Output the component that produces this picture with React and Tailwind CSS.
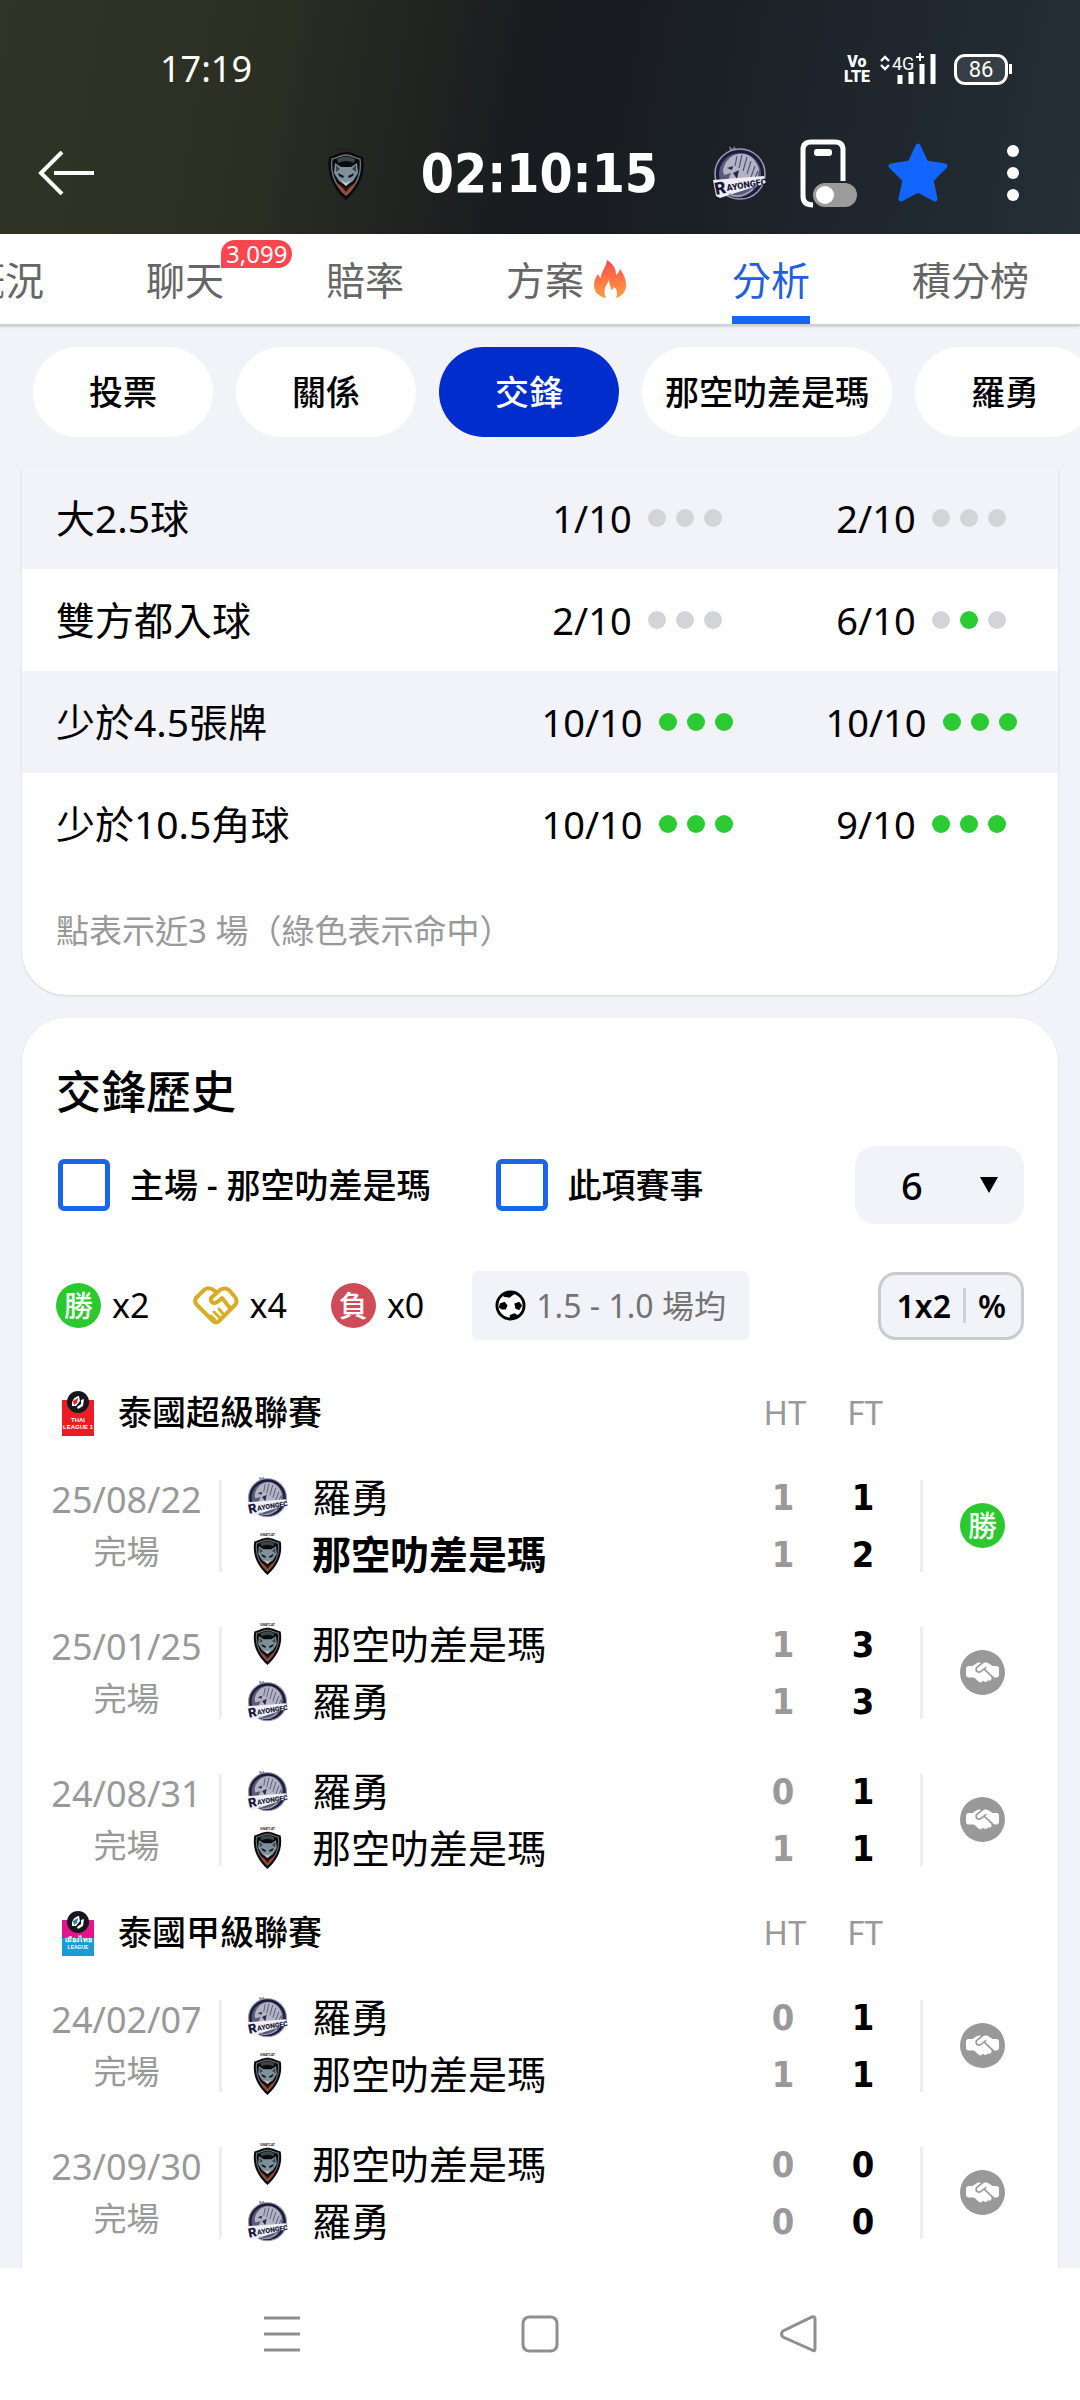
import { useState } from 'react'
import { FaHandshakeSimple } from 'react-icons/fa6'

const tabs = [
  { id: 'overview', label: '概況' },
  { id: 'chat', label: '聊天', badge: '3,099' },
  { id: 'odds', label: '賠率' },
  { id: 'tips', label: '方案', hot: true },
  { id: 'analysis', label: '分析' },
  { id: 'table', label: '積分榜' },
]

const chips = ['投票', '關係', '交鋒', '那空叻差是瑪', '羅勇']

const trends = [
  { label: '大2.5球', home: '1/10', homeDots: [0, 0, 0], away: '2/10', awayDots: [0, 0, 0] },
  { label: '雙方都入球', home: '2/10', homeDots: [0, 0, 0], away: '6/10', awayDots: [0, 1, 0] },
  { label: '少於4.5張牌', home: '10/10', homeDots: [1, 1, 1], away: '10/10', awayDots: [1, 1, 1] },
  { label: '少於10.5角球', home: '10/10', homeDots: [1, 1, 1], away: '9/10', awayDots: [1, 1, 1] },
]

const R = '羅勇'
const N = '那空叻差是瑪'

const leagues = [
  {
    id: 't1',
    name: '泰國超級聯賽',
    matches: [
      { date: '25/08/22', teams: [R, N], ht: [1, 1], ft: [1, 2], result: 'win', winner: 1 },
      { date: '25/01/25', teams: [N, R], ht: [1, 1], ft: [3, 3], result: 'draw' },
      { date: '24/08/31', teams: [R, N], ht: [0, 1], ft: [1, 1], result: 'draw' },
    ],
  },
  {
    id: 't2',
    name: '泰國甲級聯賽',
    matches: [
      { date: '24/02/07', teams: [R, N], ht: [0, 1], ft: [1, 1], result: 'draw' },
      { date: '23/09/30', teams: [N, R], ht: [0, 0], ft: [0, 0], result: 'draw' },
    ],
  },
]

/* ── Logos and icons ── */

function FoxLogo({ className }) {
  return (
    <svg viewBox="0 0 40 54" className={className} aria-hidden="true">
      <text x="20" y="4" textAnchor="middle" fontSize="4" fontWeight="700" fontFamily="Liberation Sans, sans-serif" fill="#222">SWATCAT</text>
      <path d="M20 6C26 6 30 9 37 11C40 28 33 43 20 54C7 43 0 28 3 11C10 9 14 6 20 6Z" fill="#0b0b0d" />
      <path d="M20 9C25 9 29 12 34 13C36 27 31 39 20 49C9 39 4 27 6 13C11 12 15 9 20 9Z" fill="none" stroke="#6d7378" strokeWidth="1.4" />
      <path d="M11 13Q20 8 29 13L28 17Q20 13 12 17Z" fill="#3c464d" />
      <path d="M9 17L15 21H25L31 17L32 27L27 35L20 40L13 35L8 27Z" fill="#7f909b" />
      <path d="M10 19L14 23L10 26ZM30 19L26 23L30 26Z" fill="#39444c" />
      <path d="M12 27L18 30L17 32L13 30ZM28 27L22 30L23 32L27 30Z" fill="#101418" />
      <path d="M15 34L20 37L25 34L20 40Z" fill="#c5ced4" />
      <path d="M10 36L20 44L30 36L28 40L20 49L12 40Z" fill="#a5402d" />
      <path d="M13 37L20 42L27 37L20 46Z" fill="#27130f" />
    </svg>
  )
}

function RayongLogo({ className }) {
  return (
    <svg viewBox="0 0 54 54" className={className} aria-hidden="true">
      <path d="M17 5L16 0L20 3L21 0L24 4Z" fill="#77778d" />
      <circle cx="27" cy="28" r="25" fill="#1c1c3c" stroke="#9c9cb0" strokeWidth="1.5" />
      <circle cx="27" cy="28" r="21" fill="#5a5a76" />
      <path d="M10 25C11 17 17 9 25 8C36 6 44 14 46 24L44 34L27 36L15 34L18 27L11 29Z" fill="#b3b3c4" />
      <path d="M24 10L22 20M29 9L26 22M34 11L30 25M38 15L34 28M42 20L38 31M45 25L41 34" stroke="#55557a" strokeWidth="1.2" fill="none" />
      <path d="M14 22L20 20L19 24ZM20 27L26 24L24 33Z" fill="#28284c" />
      <path d="M0 34L51 30L53 37L7 52L3 50Z" fill="#eeeef4" />
      <text x="3" y="49" fontSize="17" fontWeight="900" fontFamily="Roboto, sans-serif" fill="#17173a" transform="rotate(-12 3 49)">R</text>
      <text x="14" y="45" fontSize="9" fontWeight="900" fontFamily="Roboto, sans-serif" fill="#17173a" transform="rotate(-9 14 45)">AYONGFC</text>
      <path d="M16 48Q28 54 40 43" fill="none" stroke="#9c9cb0" strokeWidth="2" />
    </svg>
  )
}

function LeagueLogo({ id }) {
  const second = id === 't2'
  return (
    <svg viewBox="0 0 34 46" className="h-[46px] w-[34px]" aria-hidden="true">
      <rect x="1" y="10" width="32" height="36" fill={second ? '#e6148c' : '#ed1c24'} />
      {second && <rect x="1" y="28" width="32" height="18" fill="#1c9ad6" />}
      <circle cx="17" cy="12" r="11" fill="#15171c" />
      <path d="M11 13C12 8 16 6 18 6L19 11L15 16L11 16ZM20 10L23 9L22 16L17 19L16 17L20 14Z" fill="#fff" />
      <path d="M12 11L17 8L16 13L13 15Z" fill={second ? '#2b7f9d' : '#ed1c24'} />
      <g fill="#fff" fontFamily="Liberation Sans, sans-serif" fontWeight="700" textAnchor="middle">
        {second ? (
          <>
            <text x="17" y="32" fontSize="7">เมืองไทย</text>
            <text x="17" y="39" fontSize="5">LEAGUE</text>
          </>
        ) : (
          <>
            <text x="17" y="32" fontSize="6">THAI</text>
            <text x="17" y="39" fontSize="6">LEAGUE 1</text>
          </>
        )}
      </g>
    </svg>
  )
}

function Flame() {
  return (
    <svg viewBox="0 0 32 38" className="h-[38px] w-8" aria-hidden="true">
      <defs>
        <linearGradient id="flame" x1="0" y1="0" x2="0" y2="1">
          <stop offset="0" stopColor="#ff4a4f" />
          <stop offset="1" stopColor="#ff9f3f" />
        </linearGradient>
      </defs>
      <path fill="url(#flame)" d="M13 0C19 4 22 8 22 15C24 14 25 12 26 9C30 14 32 20 32 25C32 32 28 36 22 38C24 33 23 29 20 27C19 30 18 30 17 29C16 25 15 22 15 20C13 25 8 29 12 38C5 37 0 32 0 25C0 20 2 17 4 14C5 16 5 17 7 18C7 11 12 8 13 0Z" />
    </svg>
  )
}

function DrawIcon() {
  return (
    <svg viewBox="0 0 46 39" className="h-[39px] w-[46px]" fill="none" stroke="#d6ad27" strokeWidth="4" strokeLinecap="round" strokeLinejoin="round" aria-hidden="true">
      <path d="M22 5Q16 0 11 4L3 12Q1 16 4 19L20 35Q23 38 26 35L42 19Q45 15 42 11L36 4Q32 1 27 4L18 12Q17 16 21 17Q24 17 29 12L37 22" />
      <path d="M26 23L31 29M21 26L27 32M18 30L22 34" strokeWidth="3" />
    </svg>
  )
}

function Ball() {
  return (
    <svg viewBox="0 0 32 32" className="size-[31px]" aria-hidden="true">
      <circle cx="16" cy="16" r="14" fill="#fff" stroke="#000" strokeWidth="3" />
      <path d="M8 4L16 2L20 4L15 8L9 7ZM5 14L10 12L13 16L11 20L7 20L4 18ZM20 14L25 12L28 16L25 21L21 19ZM15 26L20 24L24 26L20 30H16Z" fill="#000" />
    </svg>
  )
}

function PhoneToggle() {
  return (
    <svg viewBox="0 0 58 70" className="h-[70px] w-[58px]" aria-hidden="true">
      <path d="M43 43V12Q43 4 35 4H11Q3 4 3 12V58Q3 67 13 67" fill="none" stroke="#fff" strokeWidth="5" />
      <rect x="14" y="11" width="18" height="7" rx="3" fill="#fff" />
      <rect x="13" y="45" width="44" height="24" rx="12" fill="#9b9b9b" />
      <circle cx="25" cy="57" r="9" fill="#fff" />
    </svg>
  )
}

/* ── Small pieces ── */

function Dots({ values }) {
  return (
    <span className="flex gap-[10px]">
      {values.map((v, i) => (
        <span key={i} className={`size-[18px] rounded-full ${v ? 'bg-[#2dcb33]' : 'bg-[#d3d4d7]'}`} />
      ))}
    </span>
  )
}

function Ratio({ value, dots }) {
  return (
    <div className="flex items-center justify-center gap-4">
      <span>{value}</span>
      <Dots values={dots} />
    </div>
  )
}

function ResultBadge({ result }) {
  if (result === 'draw') {
    return (
      <span className="flex size-[45px] items-center justify-center rounded-full bg-[#999]">
        <FaHandshakeSimple className="size-[33px] text-white" />
      </span>
    )
  }
  return (
    <span className={`flex size-[45px] items-center justify-center rounded-full text-[29px] leading-none font-medium text-white ${result === 'win' ? 'bg-[#2bc92f]' : 'bg-[#d04b58]'}`}>
      {result === 'win' ? '勝' : '負'}
    </span>
  )
}

function StatusBar() {
  return (
    <div className="flex h-[138px] items-center justify-between pr-[68px] pl-40">
      <span className="text-4xl">17:19</span>
      <div className="flex items-center">
        <span className="flex flex-col text-center font-['Roboto',sans-serif] text-base leading-[15px] font-black">
          <span>Vo</span>
          <span>LTE</span>
        </span>
        <svg viewBox="0 0 58 32" className="ml-[10px] h-8 w-[58px] overflow-visible" aria-hidden="true">
          <path d="M1 8L5 4L9 8M1 12L5 16L9 12" fill="none" stroke="#fff" strokeWidth="2.4" />
          <text x="12" y="17" fontSize="18" fontFamily="Roboto, sans-serif" fill="#fff">4G</text>
          <path d="M40 0V8M36 4H44" stroke="#fff" strokeWidth="2" />
          <path d="M20 22V31M31 19V31M42 11V31M53 1V31" stroke="#fff" strokeWidth="5" />
        </svg>
        <span className="ml-4 flex h-[31px] w-[54px] items-center justify-center rounded-[11px] border-3 border-white bg-white/10 font-['Roboto',sans-serif] text-[22px]">86</span>
        <span className="ml-px h-[10px] w-[3px] bg-white" />
      </div>
    </div>
  )
}

function MatchHeader() {
  return (
    <header className="h-[234px] bg-[linear-gradient(100deg,#303527_0%,#2b2e22_25%,#181b1f_50%,#1c2228_70%,#242f36_100%)] text-white">
      <StatusBar />
      <div className="flex h-[70px] items-center pr-[60px] pl-[38px]">
        <button aria-label="返回">
          <svg viewBox="0 0 58 44" className="h-11 w-[58px]" fill="none" stroke="#fff" strokeWidth="4">
            <path d="M24 1L3 22L24 43M16 22H56" />
          </svg>
        </button>
        <div className="mr-[33px] flex flex-1 items-center justify-end gap-[55px]">
          <FoxLogo className="h-[54px] w-10" />
          <span className="font-['DejaVu_Sans_Condensed','Roboto',sans-serif] text-[53px] leading-none font-bold">02:10:15</span>
          <RayongLogo className="size-[54px]" />
        </div>
        <div className="flex items-center">
          <button aria-label="懸浮窗"><PhoneToggle /></button>
          <button aria-label="收藏" className="ml-[30px]">
            <svg viewBox="0 0 60 60" className="size-[60px]">
              <path d="M30 3L38 20L57 23L43 37L47 56L30 47L13 56L17 37L3 23L22 20Z" fill="#1266ff" stroke="#1266ff" strokeWidth="5" strokeLinejoin="round" />
            </svg>
          </button>
          <button aria-label="更多" className="ml-[58px]">
            <svg viewBox="0 0 14 60" className="h-[60px] w-[14px]" fill="#fff">
              <circle cx="7" cy="8" r="6" />
              <circle cx="7" cy="30" r="6" />
              <circle cx="7" cy="52" r="6" />
            </svg>
          </button>
        </div>
      </div>
    </header>
  )
}

function MatchRow({ match }) {
  return (
    <tr className="h-[147px]">
      <td className="p-0">
        <div className="flex h-[92px] flex-col justify-center border-r-3 border-[#eee] pl-3 text-center leading-[52px] text-[#999]">
          <span className="text-4xl leading-[52px]">{match.date}</span>
          <span className="text-[33px]">完場</span>
        </div>
      </td>
      <td className="p-0 pl-[25px]">
        {match.teams.map((t, i) => (
          <div key={t} className="flex h-[57px] items-center gap-6">
            <span className="flex w-[41px] justify-center">
              {t === R ? <RayongLogo className="size-[42px]" /> : <FoxLogo className="h-[42px] w-[31px]" />}
            </span>
            <span className={`text-[39px] ${match.winner === i ? 'font-bold' : ''}`}>{t}</span>
          </div>
        ))}
      </td>
      {['ht', 'ft'].map(k => (
        <td key={k} className={`p-0 pr-1 text-center font-['DejaVu_Sans_Condensed','Roboto',sans-serif] text-[36px] leading-[57px] font-bold ${k === 'ht' ? 'text-[#999]' : 'text-black'}`}>
          <div>{match[k][0]}</div>
          <div>{match[k][1]}</div>
        </td>
      ))}
      <td className="p-0 pl-[15px]">
        <div className="flex h-[92px] items-center justify-center border-l-3 border-[#eee] pr-4">
          <ResultBadge result={match.result} />
        </div>
      </td>
    </tr>
  )
}

function LeagueTable({ league }) {
  return (
    <table className="w-full table-fixed">
      <colgroup>
        <col className="w-[200px]" />
        <col />
        <col className="w-20" />
        <col className="w-20" />
        <col className="w-[153px]" />
      </colgroup>
      <thead>
        <tr className="h-[79px] text-[#999]">
          <th colSpan={2} className="p-0 pl-[39px] text-left font-medium text-black">
            <div className="flex items-center gap-[23px]">
              <LeagueLogo id={league.id} />
              <span className="text-[34px]">{league.name}</span>
            </div>
          </th>
          <th className="p-0 text-[33px] font-normal">HT</th>
          <th className="p-0 text-[33px] font-normal">FT</th>
          <td />
        </tr>
      </thead>
      <tbody>
        {league.matches.map(m => <MatchRow key={m.date} match={m} />)}
      </tbody>
    </table>
  )
}

export default function App() {
  const [tab, setTab] = useState('analysis')
  const [chip, setChip] = useState('交鋒')
  const [homeOnly, setHomeOnly] = useState(false)
  const [sameLeague, setSameLeague] = useState(false)
  const [count, setCount] = useState('6')

  const box = 'size-[52px] appearance-none rounded-md border-5 border-[#1c64e8] bg-white checked:bg-[#1c64e8]'

  return (
    <div className="flex min-h-screen flex-col overflow-hidden bg-[#f2f3f8] font-['Noto_Sans','Noto_Sans_CJK_TC',sans-serif] text-black">
      <MatchHeader />

      {/* ── Tabs ── */}
      <nav className="-ml-[34px] flex h-[92px] gap-[102px] border-b-2 border-[#cfd0d4] bg-white shadow-sm">
        {tabs.map(t => (
          <button
            key={t.id}
            onClick={() => setTab(t.id)}
            className={`relative flex shrink-0 items-center gap-[10px] border-b-8 pt-2 text-[39px] leading-none ${tab === t.id ? 'border-[#1566f0] text-[#1f5fe0]' : 'border-transparent text-[#666]'} ${t.hot ? 'pr-1' : ''}`}
          >
            {t.label}
            {t.hot && <Flame />}
            {t.badge && (
              <span className="absolute top-[6px] left-[75px] rounded-full rounded-bl-none bg-[#f9464f] px-[5px] text-2xl leading-7 text-white">{t.badge}</span>
            )}
          </button>
        ))}
      </nav>

      {/* ── Section chips ── */}
      <div className="flex gap-[23px] py-[21px] pl-[33px]">
        {chips.map(c => (
          <button
            key={c}
            onClick={() => setChip(c)}
            className={`h-[90px] min-w-[180px] shrink-0 rounded-full px-[23px] text-[34px] font-medium ${chip === c ? 'bg-[#002dcc] text-white' : 'bg-white'}`}
          >
            {c}
          </button>
        ))}
      </div>

      <main className="mt-[9px] flex flex-1 flex-col gap-[23px] px-[22px]">
        {/* ── Trends ── */}
        <section className="rounded-b-[44px] bg-white shadow-sm">
          <table className="w-full table-fixed">
            <colgroup>
              <col />
              <col className="w-[294px]" />
              <col className="w-[274px]" />
            </colgroup>
            <tbody className="text-[38px]">
              {trends.map(t => (
                <tr key={t.label} className="h-[102px] odd:bg-[#f2f3f8]">
                  <th scope="row" className="p-0 pl-[34px] text-left text-[39px] font-normal">{t.label}</th>
                  <td className="p-0"><Ratio value={t.home} dots={t.homeDots} /></td>
                  <td className="p-0"><Ratio value={t.away} dots={t.awayDots} /></td>
                </tr>
              ))}
            </tbody>
          </table>
          <p className="px-[34px] pt-8 pb-10 text-[33px] leading-[48px] text-[#999]">點表示近3 場（綠色表示命中）</p>
        </section>

        {/* ── Head to head history ── */}
        <section className="flex-1 rounded-t-[44px] bg-white shadow-sm">
          <h2 className="px-[34px] pt-[41px] text-[45px] leading-[66px] font-medium">交鋒歷史</h2>

          <div className="mt-[21px] flex items-center pr-[34px] pl-9 text-[34px] font-medium">
            <label className="flex items-center gap-5">
              <input type="checkbox" className={box} checked={homeOnly} onChange={e => setHomeOnly(e.target.checked)} />
              主場 - 那空叻差是瑪
            </label>
            <label className="ml-[65px] flex items-center gap-5">
              <input type="checkbox" className={box} checked={sameLeague} onChange={e => setSameLeague(e.target.checked)} />
              此項賽事
            </label>
            <div className="relative ml-auto">
              <select
                aria-label="場數"
                value={count}
                onChange={e => setCount(e.target.value)}
                className="h-[78px] w-[169px] appearance-none rounded-[20px] bg-[#f2f3f8] pl-[46px] text-[38px] font-medium"
              >
                <option>6</option>
                <option>10</option>
                <option>20</option>
              </select>
              <svg viewBox="0 0 20 18" className="pointer-events-none absolute top-[30px] right-[25px] h-[18px] w-5" aria-hidden="true">
                <path d="M1 1H19L10 17Z" />
              </svg>
            </div>
          </div>

          <div className="mt-[47px] flex items-center px-[34px] text-[34px]">
            <div className="flex items-center gap-[11px]"><ResultBadge result="win" />x2</div>
            <div className="ml-[44px] flex items-center gap-[10px]"><DrawIcon />x4</div>
            <div className="ml-[44px] flex items-center gap-[11px]"><ResultBadge result="loss" />x0</div>
            <div className="ml-[48px] flex h-[69px] items-center gap-[10px] rounded-md bg-[#f2f3f8] px-[23px] text-[32px] text-[#737373]">
              <Ball />1.5 - 1.0 場均
            </div>
            <button className="ml-auto flex h-[68px] items-center rounded-[18px] border-3 border-[#c9cbcf] bg-[#f2f3f8] px-[15px] text-[32px] font-semibold">
              1x2
              <span className="mx-3 h-[35px] w-[3px] bg-[#cfd0d4]" />
              %
            </button>
          </div>

          <div className="mt-[33px]">
            {leagues.map(l => <LeagueTable key={l.id} league={l} />)}
          </div>
        </section>
      </main>

      {/* ── System navigation ── */}
      <footer className="flex h-[132px] items-center justify-center gap-[220px] bg-white">
        {['M1 3H37M1 19H37M1 35H37', 'M9 2H29Q36 2 36 9V29Q36 36 29 36H9Q2 36 2 29V9Q2 2 9 2Z', 'M33 2Q36 1 36 4V34Q36 37 33 35L4 22Q1 19 4 16Z'].map((d, i) => (
          <button key={d} aria-label={['最近', '主頁', '返回'][i]}>
            <svg viewBox="0 0 38 38" className="size-[38px]" fill="none" stroke="#8f8f8f" strokeWidth="3"><path d={d} /></svg>
          </button>
        ))}
      </footer>
    </div>
  )
}
